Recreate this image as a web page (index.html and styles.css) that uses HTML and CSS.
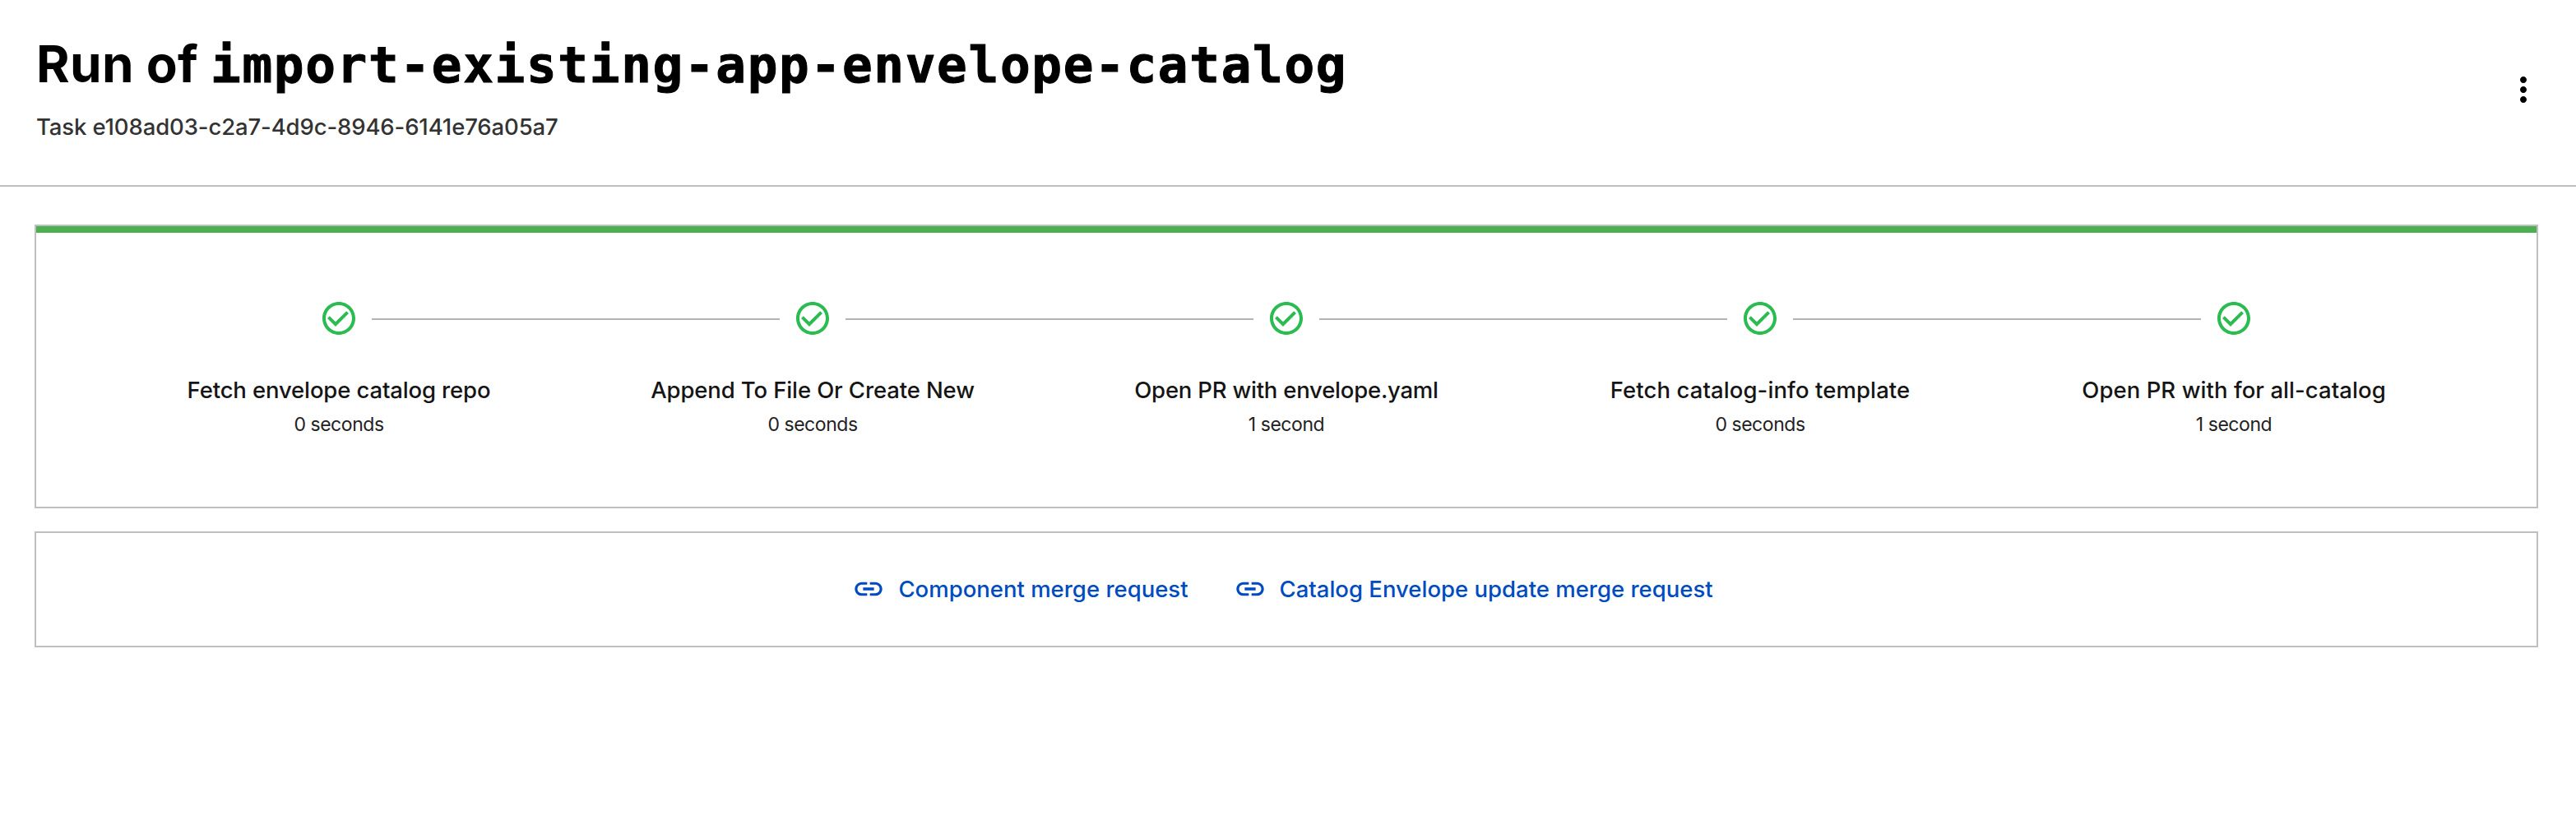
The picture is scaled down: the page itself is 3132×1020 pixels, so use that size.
FILE: index.html
```html
<!DOCTYPE html>
<html lang="en">
<head>
<meta charset="utf-8">
<title>Run of import-existing-app-envelope-catalog</title>
<link rel="stylesheet" href="styles.css">
</head>
<body>
<svg class="sprite" aria-hidden="true">
  <symbol id="check" viewBox="0 0 24 24"><path d="M16.59 7.58L10 14.17l-3.59-3.58L5 12l5 5 8-8zM12 2C6.48 2 2 6.48 2 12s4.48 10 10 10 10-4.48 10-10S17.52 2 12 2zm0 18c-4.42 0-8-3.58-8-8s3.58-8 8-8 8 3.58 8 8-3.58 8-8 8z"/></symbol>
  <symbol id="link" viewBox="0 0 24 24"><path d="M3.9 12c0-1.71 1.39-3.1 3.1-3.1h4V7H7c-2.76 0-5 2.24-5 5s2.24 5 5 5h4v-1.9H7c-1.71 0-3.1-1.39-3.1-3.1zM8 13h8v-2H8v2zm9-6h-4v1.9h4c1.71 0 3.1 1.39 3.1 3.1s-1.39 3.1-3.1 3.1h-4V17h4c2.76 0 5-2.24 5-5s-2.24-5-5-5z"/></symbol>
</svg>
<header class="header">
  <div class="heading">
    <h1 class="title"><span>Run of</span> <code class="name">import-existing-app-envelope-catalog</code></h1>
    <p class="task">Task e108ad03-c2a7-4d9c-8946-6141e76a05a7</p>
  </div>
  <button class="menu" aria-label="More"><svg viewBox="0 0 24 24"><path d="M12 8c1.1 0 2-.9 2-2s-.9-2-2-2-2 .9-2 2 .9 2 2 2zm0 2c-1.1 0-2 .9-2 2s.9 2 2 2 2-.9 2-2-.9-2-2-2zm0 6c-1.1 0-2 .9-2 2s.9 2 2 2 2-.9 2-2-.9-2-2-2z"/></svg></button>
</header>
<main class="content">
  <section class="card run">
    <div class="progress"></div>
    <ol class="steps">
      <li class="step"><div class="marker"><i></i><svg><use href="#check"/></svg><i></i></div><div class="label">Fetch envelope catalog repo</div><div class="time">0 seconds</div></li>
      <li class="step"><div class="marker"><i></i><svg><use href="#check"/></svg><i></i></div><div class="label">Append To File Or Create New</div><div class="time">0 seconds</div></li>
      <li class="step"><div class="marker"><i></i><svg><use href="#check"/></svg><i></i></div><div class="label">Open PR with envelope.yaml</div><div class="time">1 second</div></li>
      <li class="step"><div class="marker"><i></i><svg><use href="#check"/></svg><i></i></div><div class="label">Fetch catalog-info template</div><div class="time">0 seconds</div></li>
      <li class="step"><div class="marker"><i></i><svg><use href="#check"/></svg><i></i></div><div class="label">Open PR with for all-catalog</div><div class="time">1 second</div></li>
    </ol>
  </section>
  <section class="card links">
    <a class="link"><svg><use href="#link"/></svg><span>Component merge request</span></a>
    <a class="link"><svg><use href="#link"/></svg><span>Catalog Envelope update merge request</span></a>
  </section>
</main>
</body>
</html>
```
FILE: styles.css
```css
* { box-sizing: border-box; }
body {
  margin: 0;
  background: #fff;
  color: #151515;
  font-family: Inter, "Liberation Sans", sans-serif;
}
h1, p, ol { margin: 0; padding: 0; }
.sprite { display: none; }

.header {
  display: flex;
  justify-content: space-between;
  height: 227px;
  padding: 38px 40px 0 44px;
  border-bottom: 2px solid #bfbfbf;
}
.title {
  display: flex;
  align-items: baseline;
  gap: 15px;
  color: #000;
  font-size: 62px;
  font-weight: 650;
  line-height: 80px;
  letter-spacing: 0.3px;
  white-space: nowrap;
}
.title > span { width: 197px; }
.name {
  font: 700 61px/70px "DejaVu Sans Mono", monospace;
  letter-spacing: 1.67px;
  -webkit-text-stroke: 1px #000;
}
.task {
  margin-top: 18px;
  color: #333;
  font-size: 27.5px;
  font-weight: 500;
  line-height: 36px;
  letter-spacing: -0.12px;
}
.menu {
  width: 48px;
  height: 48px;
  margin-top: 47px;
  padding: 0;
  border: 0;
  background: none;
}
.menu svg { display: block; width: 48px; height: 48px; }

.content {
  display: flex;
  flex-direction: column;
  gap: 28px;
  padding: 46px 46px 0 42px;
}
.card { border: 2px solid #bfbfbf; }
.run { height: 345px; }
.progress { height: 8px; background: #4caf50; }
.steps {
  display: grid;
  grid-template-columns: repeat(5, 1fr);
  padding: 80px 80px 0;
  list-style: none;
}
.step { text-align: center; white-space: nowrap; }
.marker { display: flex; align-items: center; gap: 16px; }
.marker svg { width: 48px; height: 48px; fill: #2bbb51; }
.marker i { flex: 1; height: 2px; margin-top: 2px; background: #b3b3b3; }
.step:first-child i:first-child,
.step:last-child i:last-child { background: none; }
.label {
  margin-top: 45px;
  font-size: 27.5px;
  font-weight: 550;
  line-height: 36px;
  letter-spacing: -0.14px;
}
.step:nth-child(2) .label { letter-spacing: -0.12px; }
.step:nth-child(3) .label { letter-spacing: -0.22px; }
.step:nth-child(4) .label { letter-spacing: 0.1px; }
.step:nth-child(5) .label { letter-spacing: 0.06px; }
.time {
  margin-top: 8px;
  color: #222;
  font-size: 23px;
  line-height: 32px;
  letter-spacing: -0.45px;
}

.links {
  display: flex;
  justify-content: center;
  gap: 55px;
  height: 141px;
  padding: 48px 9px 0 0;
}
.link {
  display: flex;
  gap: 16px;
  height: 40px;
  color: #004cbf;
  font-size: 27.5px;
  font-weight: 550;
  line-height: 40px;
}
.link svg { width: 40px; height: 40px; fill: currentColor; }
```
